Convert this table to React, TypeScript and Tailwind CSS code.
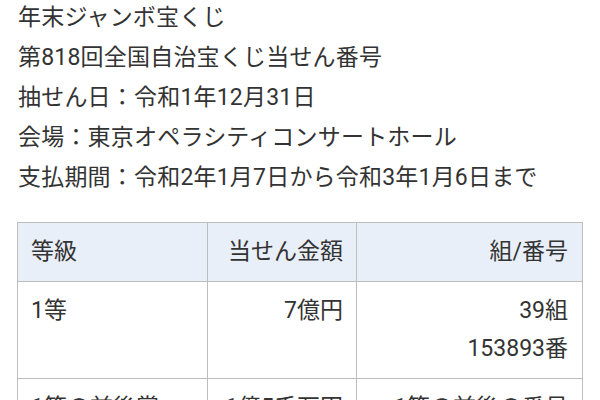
import React from 'react';

const info = [
  '年末ジャンボ宝くじ',
  '第818回全国自治宝くじ当せん番号',
  '抽せん日：令和1年12月31日',
  '会場：東京オペラシティコンサートホール',
  '支払期間：令和2年1月7日から令和3年1月6日まで',
];

const rows = [
  { grade: '1等', amount: '7億円', num: ['39組', '153893番'] },
  { grade: '1等の前後賞', amount: '1億5千万円', num: ['1等の前後の番号'] },
];

export default function App() {
  return (
    <div className="w-[600px] h-[400px] overflow-hidden bg-white text-[#333333] font-['Roboto','Noto_Sans_CJK_JP',sans-serif]">
      <div className="px-[18px] -mt-[2px] text-[23px] leading-[40px] tracking-[0.2px]">
        {info.map((line) => (
          <p key={line}>{line}</p>
        ))}
      </div>

      <table className="mt-[24px] ml-[17px] w-[566px] border-collapse text-[23px] leading-[38px]">
        <thead>
          <tr className="bg-[#e9eff8]">
            <th className="w-[190px] border border-[#bdbdbd] px-[13px] py-[10px] text-left font-normal">等級</th>
            <th className="w-[149px] border border-[#bdbdbd] px-[13px] py-[10px] text-right font-normal">当せん金額</th>
            <th className="border border-[#bdbdbd] px-[14px] py-[10px] text-right font-normal">組/番号</th>
          </tr>
        </thead>
        <tbody>
          {rows.map((r) => (
            <tr key={r.grade}>
              <td className="border border-[#bdbdbd] px-[13px] py-[10px] align-top">{r.grade}</td>
              <td className="border border-[#bdbdbd] px-[13px] py-[10px] text-right align-top">{r.amount}</td>
              <td className="border border-[#bdbdbd] px-[14px] py-[10px] text-right align-top">
                {r.num.map((n) => (
                  <div key={n}>{n}</div>
                ))}
              </td>
            </tr>
          ))}
        </tbody>
      </table>
    </div>
  );
}
